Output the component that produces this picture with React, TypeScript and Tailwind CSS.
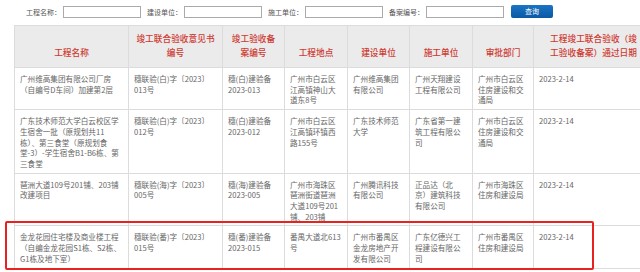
import React from 'react';

const font = { fontFamily: '"Noto Sans CJK SC", "Noto Sans", sans-serif' };

type Row = string[][];

const headers: string[][] = [
  ['工程名称'],
  ['竣工联合验收意见书', '编号'],
  ['竣工验收备', '案编号'],
  ['工程地点'],
  ['建设单位'],
  ['施工单位'],
  ['审批部门'],
  ['工程竣工联合验收（竣', '工验收备案）通过日期'],
];

const rows: Row[] = [
  [
    ['广州维高集团有限公司厂房', '（自编号D车间）加建第2层'],
    ['穗联验(白)字〔2023〕', '013号'],
    ['穗(白)建验备', '2023-013'],
    ['广州市白云区', '江高镇神山大', '道东8号'],
    ['广州维高集团', '有限公司'],
    ['广州天翔建设', '工程有限公司'],
    ['广州市白云区', '住房建设和交', '通局'],
    ['2023-2-14'],
  ],
  [
    ['广东技术师范大学白云校区学', '生宿舍一批（原规划共11', '栋）、第三食堂（原规划食', '堂-3）-学生宿舍B1-B6栋、第', '三食堂'],
    ['穗联验(白)字〔2023〕', '012号'],
    ['穗(白)建验备', '2023-012'],
    ['广州市白云区', '江高镇环镇西', '路155号'],
    ['广东技术师范', '大学'],
    ['广东省第一建', '筑工程有限公', '司'],
    ['广州市白云区', '住房建设和交', '通局'],
    ['2023-2-14'],
  ],
  [
    ['琶洲大道109号201铺、203铺', '改建项目'],
    ['穗联验(海)字〔2023〕', '005号'],
    ['穗(海)建验备', '2023-005'],
    ['广州市海珠区', '琶洲街道琶洲', '大道109号201', '铺、203铺'],
    ['广州腾讯科技', '有限公司'],
    ['正品达（北', '京）建筑科技', '有限公司'],
    ['广州市海珠区', '住房和建设局'],
    ['2023-2-14'],
  ],
  [
    ['金龙花园住宅楼及商业楼工程', '（自编金龙花园S1栋、S2栋、', 'G1栋及地下室）'],
    ['穗联验(番)字〔2023〕', '015号'],
    ['穗(番)建验备', '2023-015'],
    ['番禺大道北613', '号'],
    ['广州市番禺区', '金龙房地产开', '发有限公司'],
    ['广东亿德兴工', '程建设有限公', '司'],
    ['广州市番禺区', '住房和建设局'],
    ['2023-2-14'],
  ],
];

const widths = [114, 94, 62, 63, 62, 63, 61, 120];

function Field({ label }: { label: string }) {
  return (
    <div className="flex items-center">
      <span className="text-[7px] leading-[12px] text-[#555] whitespace-nowrap">{label}：</span>
      <div className="ml-[2px] w-[78px] h-[12px] border border-[#aaa] bg-white" />
    </div>
  );
}

export default function App() {
  return (
    <div className="relative w-[640px] h-[272px] overflow-hidden bg-white" style={font}>
      {/* Search bar */}
      <div className="flex items-center h-[25px] pl-[26px] pb-[2px] gap-[6px]">
        <Field label="工程名称" />
        <Field label="建设单位" />
        <Field label="施工单位" />
        <Field label="备案编号" />
        <button className="ml-[1px] w-[42px] h-[13px] rounded-[2px] bg-gradient-to-b from-[#1a74c4] to-[#0a58a4] text-white text-[7px] leading-[13px]">
          查询
        </button>
      </div>

      {/* Table */}
      <table className="ml-[14px] table-fixed border-collapse" style={{ width: widths.reduce((a, b) => a + b, 0) }}>
        <colgroup>
          {widths.map((w, i) => (
            <col key={i} style={{ width: w }} />
          ))}
        </colgroup>
        <thead>
          <tr className="h-[42px] bg-[#ebebeb]">
            {headers.map((h, i) => (
              <th
                key={i}
                className="border border-[#dcdcdc] align-bottom pb-[7px] px-[3px] text-center font-medium text-[8.7px] leading-[14px] text-[#cf3a32]"
              >
                {h.map((l, j) => (
                  <div key={j} className="whitespace-nowrap">{l}</div>
                ))}
              </th>
            ))}
          </tr>
        </thead>
        <tbody>
          {rows.map((r, i) => (
            <tr key={i}>
              {r.map((cell, j) => (
                <td
                  key={j}
                  className="border border-[#dcdcdc] align-top pl-[5px] pr-[3px] pt-[6px] pb-[3px] text-[7.6px] leading-[10.7px] text-[#666]"
                >
                  {cell.map((l, k) => (
                    <div key={k} className="whitespace-nowrap">{l}</div>
                  ))}
                </td>
              ))}
            </tr>
          ))}
        </tbody>
      </table>

      {/* highlight annotation */}
      <div className="absolute left-[5px] top-[221px] w-[589px] h-[49px] border-2 border-[#e8231f] rounded-[2px] pointer-events-none" />
    </div>
  );
}
